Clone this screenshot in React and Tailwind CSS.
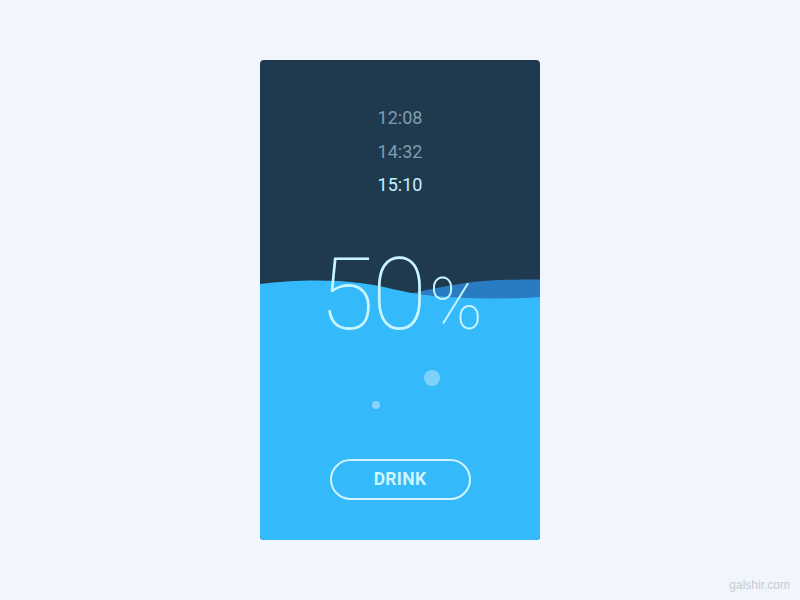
import React from 'react';

const times = [
  { t: '12:08', active: false },
  { t: '14:32', active: false },
  { t: '15:10', active: true },
];

const Water = () => (
  <svg className="absolute inset-0" width="280" height="480" viewBox="0 0 280 480">
    <path d="M140 236 C175 228 205 221 240 220 C258 219.5 270 219.5 280 219.5 L280 480 L140 480 Z" fill="#2a7cc2" />
    <path d="M0 224 C30 220 70 219 100 223 C125 226 145 233 165 235 C195 238 240 240 280 237 L280 480 L0 480 Z" fill="#34b9fa" />
  </svg>
);

export default function App() {
  return (
    <div className="w-[800px] h-[600px] bg-[#f1f6fd] relative flex items-start justify-center pt-[60px]" style={{ fontFamily: 'Roboto, "Noto Sans", sans-serif' }}>
      <div className="relative w-[280px] h-[480px] rounded-[4px] overflow-hidden bg-[#1f3a4e]">
        <Water />
        <div className="absolute left-[164px] top-[310px] w-[16px] h-[16px] rounded-full bg-[#7fd2fb]" />
        <div className="absolute left-[112px] top-[341px] w-[8px] h-[8px] rounded-full bg-[#8ad6fb]" />
        <div className="relative flex flex-col items-center pt-[41px]">
          {times.map((x) => (
            <div
              key={x.t}
              className={`h-[33.5px] leading-[33.5px] text-[18px] ${x.active ? 'text-[#c6f1fd]' : 'text-[#7f9cad]'}`}
            >
              {x.t}
            </div>
          ))}
          <div className="mt-[42px] flex items-baseline text-[#c9f5ff] font-thin leading-none pl-[2px]">
            <span className="text-[101px] tracking-[-3px]">50</span>
            <span className="text-[72px] ml-[5px]">%</span>
          </div>
          <button className="mt-[114px] w-[141px] h-[41px] rounded-full border-2 border-[#d3f4ff] text-[#cff5ff] text-[17.5px] font-bold tracking-[0.3px]">
            DRINK
          </button>
        </div>
      </div>
      <div className="absolute right-[10px] bottom-[6px] text-[12px] text-[#c5cbd4]" style={{ fontFamily: 'Arial, "Liberation Sans", sans-serif' }}>
        galshir.com
      </div>
    </div>
  );
}
